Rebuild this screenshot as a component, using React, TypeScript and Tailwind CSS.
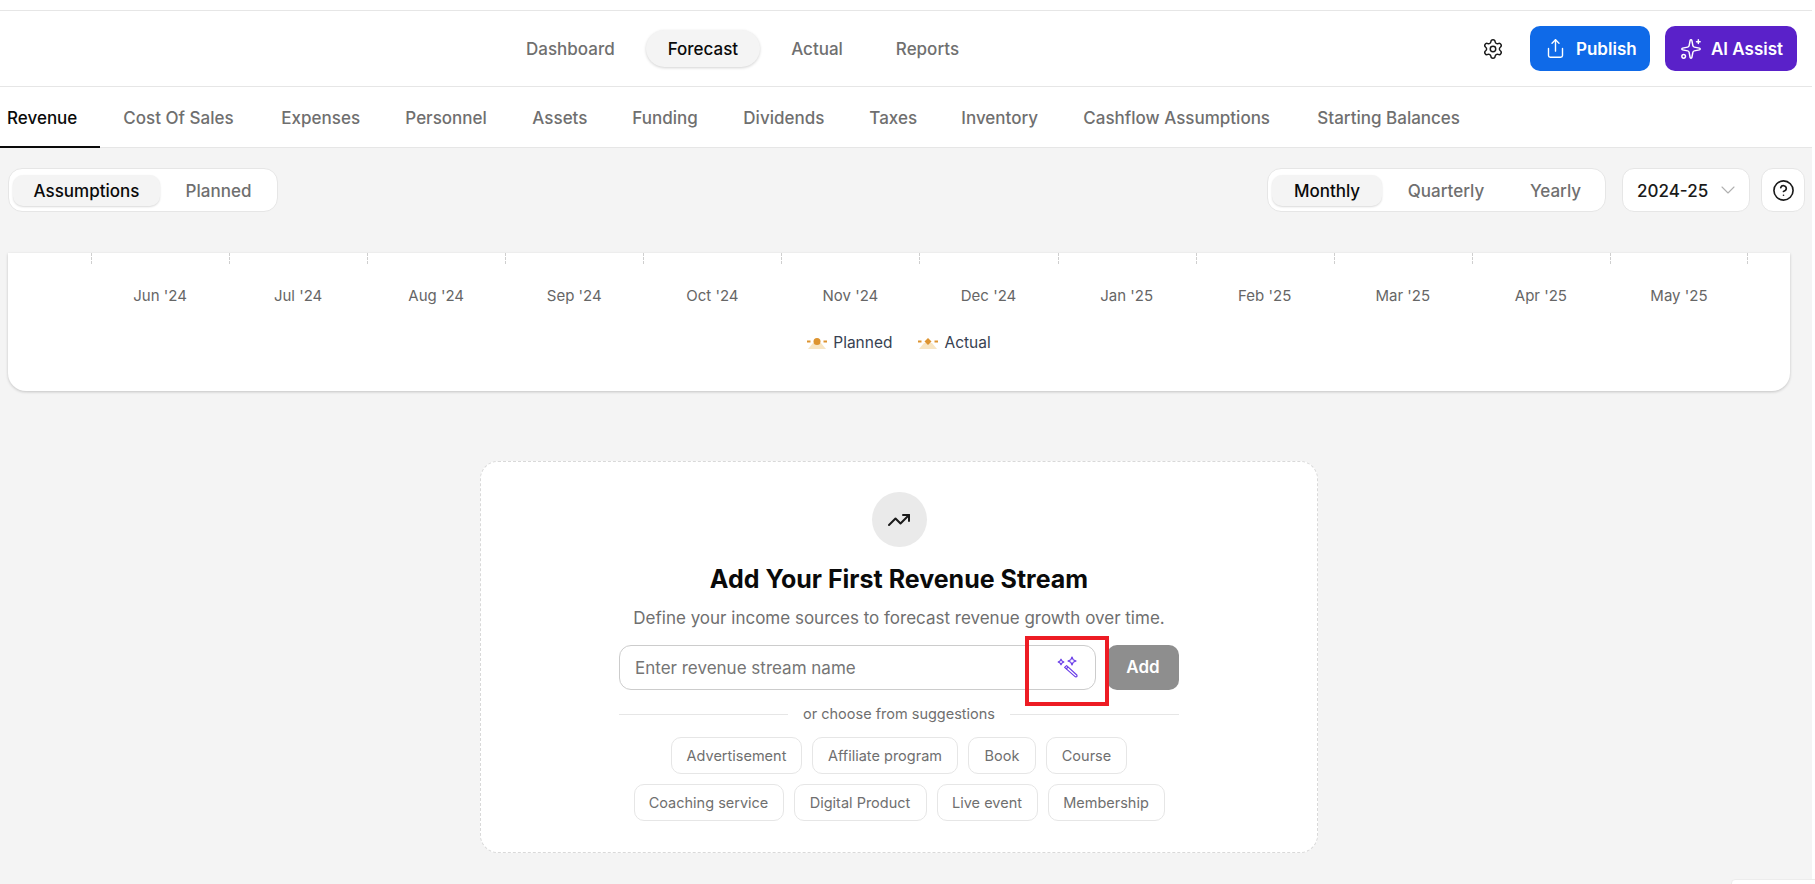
import { ChevronDown, CircleHelp, Settings, Share, Sparkles, TrendingUp } from "lucide-react";

const navItems = ["Dashboard", "Forecast", "Actual", "Reports"];
const tabs = [
  { label: "Cost Of Sales", width: "w-[158px]" },
  { label: "Expenses", width: "w-[124px]" },
  { label: "Personnel", width: "w-[127px]" },
  { label: "Assets", width: "w-[100px]" },
  { label: "Funding", width: "w-[111px]" },
  { label: "Dividends", width: "w-[126px]" },
  { label: "Taxes", width: "w-[92px]" },
  { label: "Inventory", width: "w-[122px]" },
  { label: "Cashflow Assumptions", width: "w-[234px]" },
  { label: "Starting Balances", width: "w-[200px]" },
];
const months = [
  "Jun '24",
  "Jul '24",
  "Aug '24",
  "Sep '24",
  "Oct '24",
  "Nov '24",
  "Dec '24",
  "Jan '25",
  "Feb '25",
  "Mar '25",
  "Apr '25",
  "May '25",
];
const suggestions = [
  [
    { label: "Advertisement", width: "w-[131px]" },
    { label: "Affiliate program", width: "w-[146px]" },
    { label: "Book", width: "w-[68px]" },
    { label: "Course", width: "w-[81px]" },
  ],
  [
    { label: "Coaching service", width: "w-[150px]" },
    { label: "Digital Product", width: "w-[133px]" },
    { label: "Live event", width: "w-[101px]" },
    { label: "Membership", width: "w-[117px]" },
  ],
];

// recharts style legend swatch, dot or diamond over a dashed line and pale area
function LegendIcon({ diamond }: { diamond?: boolean }) {
  return (
    <svg width="20" height="11" viewBox="0 0 20 11">
      <path d="M1 11 L6 5 H14 L19 11 Z" fill="#f6dcae" opacity="0.75" />
      <path d="M0 3.5 H3.5 M16.5 3.5 H20" stroke="#dd9430" strokeWidth="2" />
      {diamond ? (
        <path d="M10 0 L13.5 3.5 L10 7 L6.5 3.5 Z" fill="#dd9430" />
      ) : (
        <circle cx="10" cy="3.5" r="3.5" fill="#dd9430" />
      )}
    </svg>
  );
}

function WandIcon() {
  return (
    <svg
      width="24"
      height="24"
      viewBox="0 0 24 24"
      fill="none"
      stroke="#6a3de8"
      strokeWidth="1.2"
      strokeLinejoin="round"
    >
      <path d="M5 4.2 L6 6 L7.8 7 L6 8 L5 9.8 L4 8 L2.2 7 L4 6 Z" />
      <path d="M16 2 L17.2 4.8 L20 6 L17.2 7.2 L16 10 L14.8 7.2 L12 6 L14.8 4.8 Z" />
      <path d="M8.6 12.4 L10.6 10.6 L20.8 20 Q21.4 21.4 20.4 21.8 Q19.6 22.2 18.8 21.4 Z" />
      <path d="M10 14 L12.2 12" />
    </svg>
  );
}

export default function App() {
  return (
    <div className="relative h-[884px] w-full overflow-hidden bg-white font-['Inter',sans-serif]">
      <div className="w-[1812px] pt-[10px]">
        {/* Top nav */}
        <div className="flex h-[77px] items-center border-y border-[#e6e6e6] bg-white pl-[504px] pr-[15px]">
          <div className="flex items-center gap-[9px]">
            {navItems.map((item) => (
              <div
                key={item}
                className={
                  item === "Forecast"
                    ? "flex h-[37px] items-center rounded-full bg-[#f4f4f4] px-[22px] pt-[3px] text-[17px] font-medium text-[#0a0a0a] shadow-[0_1px_3px_rgba(0,0,0,0.18)]"
                    : "flex h-[37px] items-center px-[22px] pt-[3px] text-[17px] font-medium text-[#6f6f6f]"
                }
              >
                {item}
              </div>
            ))}
          </div>
          <Settings size={22} strokeWidth={1.6} className="ml-auto mr-[26px] text-[#1a1a1a]" />
          <button className="flex h-[45px] w-[120px] items-center gap-[10px] rounded-[10px] bg-[#0f6ae8] pl-[15px] text-[17px] font-semibold text-white">
            <Share size={21} strokeWidth={1.6} />
            <span className="pt-[2px]">Publish</span>
          </button>
          <button className="ml-[15px] flex h-[45px] w-[132px] items-center gap-[9px] rounded-[10px] bg-[#5a21c9] pl-[15px] text-[17px] font-semibold text-white">
            <Sparkles size={22} strokeWidth={1.6} />
            <span className="pt-[2px]">AI Assist</span>
          </button>
        </div>

        {/* Sub tabs */}
        <div className="flex h-[61px] items-stretch border-b border-[#e6e6e6] bg-white">
          <div className="-mb-px flex items-center border-b-2 border-[#0a0a0a] pl-[7px] pr-[23px] pt-[4px] text-[17px] font-medium text-[#0a0a0a]">
            Revenue
          </div>
          {tabs.map((tab) => (
            <div
              key={tab.label}
              className={`flex items-center whitespace-nowrap pl-[23px] pt-[4px] text-[17px] font-medium text-[#6f6f6f] ${tab.width}`}
            >
              {tab.label}
            </div>
          ))}
        </div>

        <div className="h-[737px] bg-[#f4f4f4] pl-2 pr-[22px]">
          {/* Toolbar */}
          <div className="-mr-[15px] flex h-[105px] items-start justify-between pt-[20px]">
            <div className="flex h-[44px] items-center rounded-[14px] border border-[#e6e6e6] bg-white px-1">
              <div className="flex h-[31px] w-[147px] items-center justify-center rounded-[10px] bg-[#f4f4f4] pt-[3px] text-[17px] font-medium text-[#0a0a0a] shadow-[0_1px_2px_rgba(0,0,0,0.15)]">
                Assumptions
              </div>
              <div className="flex h-[31px] w-[113px] items-center justify-center pl-[4px] pt-[3px] text-[17px] font-medium text-[#6f6f6f]">
                Planned
              </div>
            </div>
            <div className="flex items-center">
              <div className="flex h-[44px] w-[339px] items-center rounded-[14px] border border-[#e6e6e6] bg-white pl-1">
                <div className="flex h-[31px] w-[110px] items-center justify-center rounded-[10px] bg-[#f4f4f4] pt-[3px] text-[17px] font-medium text-[#0a0a0a] shadow-[0_1px_2px_rgba(0,0,0,0.15)]">
                  Monthly
                </div>
                <div className="flex h-[31px] w-[128px] items-center justify-center pt-[3px] text-[17px] font-medium text-[#6f6f6f]">
                  Quarterly
                </div>
                <div className="flex h-[31px] w-[91px] items-center justify-center pt-[3px] text-[17px] font-medium text-[#6f6f6f]">
                  Yearly
                </div>
              </div>
              <div className="ml-[16px] flex h-[44px] w-[128px] items-center gap-[8px] rounded-[12px] border border-[#e6e6e6] bg-white pl-[14px] text-[17px] font-medium text-[#1a1a1a]">
                <span className="pt-[3px]">2024-25</span>
                <ChevronDown size={24} strokeWidth={1.1} className="text-[#b0b0b0]" />
              </div>
              <div className="ml-[11px] flex h-[44px] w-[44px] items-center justify-center rounded-[12px] border border-[#e6e6e6] bg-white">
                <CircleHelp size={23} strokeWidth={1.7} className="text-[#1a1a1a]" />
              </div>
            </div>
          </div>

          {/* Chart card, scrolled under the toolbar */}
          <div className="h-[138px] rounded-b-[18px] bg-white shadow-[0_1px_3px_rgba(0,0,0,0.2)]">
            <div className="grid grid-cols-12 pl-[83px] pr-[42px]">
              {months.map((month, idx) => (
                <div key={month} className="relative flex flex-col items-center">
                  <div className="h-[11px] w-full border-l border-dashed border-[#cfcfcf]" />
                  {idx === 11 && (
                    <div className="absolute right-0 top-0 h-[11px] border-l border-dashed border-[#cfcfcf]" />
                  )}
                  <span className="mt-[22px] text-[15px] leading-[20px] text-[#666666]">{month}</span>
                </div>
              ))}
            </div>
            <div className="mt-[27px] flex items-center justify-center gap-[26px] text-[15.5px] leading-[20px] text-[#374151]">
              <div className="flex items-center gap-[6px]">
                <LegendIcon />
                Planned
              </div>
              <div className="flex items-center gap-[6px]">
                <LegendIcon diamond />
                Actual
              </div>
            </div>
          </div>

          {/* Empty state */}
          <div className="mx-auto mt-[70px] flex h-[392px] w-[838px] flex-col items-center rounded-[18px] border border-dashed border-[#d9d9d9] bg-white pt-[30px]">
            <div className="flex h-[55px] w-[55px] items-center justify-center rounded-full bg-[#eaeaea]">
              <TrendingUp size={24} strokeWidth={2} className="text-[#1a1a1a]" />
            </div>
            <h2 className="mt-[16px] text-[25px] font-bold leading-[32px] text-[#0a0a0a]">
              Add Your First Revenue Stream
            </h2>
            <p className="mt-[11px] text-[17px] leading-[24px] text-[#6f6f6f]">
              Define your income sources to forecast revenue growth over time.
            </p>
            <div className="relative mt-[15px] flex w-[560px] gap-[11px]">
              <div className="relative flex-1">
                <input
                  placeholder="Enter revenue stream name"
                  className="h-[45px] w-full rounded-[12px] border border-[#cccccc] bg-white pl-[15px] text-[17px] outline-none placeholder:text-[#757575]"
                />
                <div className="absolute right-[16px] top-[10px]">
                  <WandIcon />
                </div>
              </div>
              <button className="h-[45px] w-[72px] rounded-[10px] bg-[#8e8e8e] text-[17px] font-semibold text-white">
                Add
              </button>
              {/* red annotation box from the screenshot */}
              <div className="absolute left-[406px] top-[-9px] h-[70px] w-[84px] border-4 border-[#ed1c24]" />
            </div>
            <div className="mt-[14px] flex w-[560px] items-center gap-[15px]">
              <div className="h-px flex-1 bg-[#e6e6e6]" />
              <span className="text-[14.5px] leading-[20px] text-[#6f6f6f]">or choose from suggestions</span>
              <div className="h-px flex-1 bg-[#e6e6e6]" />
            </div>
            <div className="mt-[13px] flex flex-col items-center gap-[10px]">
              {suggestions.map((row, r) => (
                <div key={r} className="flex gap-[10px]">
                  {row.map((chip) => (
                    <div
                      key={chip.label}
                      className={`flex h-[37px] items-center justify-center whitespace-nowrap rounded-[10px] border border-[#e6e6e6] bg-white text-[14.5px] text-[#6f6f6f] ${chip.width}`}
                    >
                      {chip.label}
                    </div>
                  ))}
                </div>
              ))}
            </div>
          </div>
        </div>
      </div>

      {/* corner of a widget peeking in at the bottom right */}
      <div className="absolute left-[1731px] top-[879px] h-[20px] w-[100px] rounded-tl-[4px] border border-[#ececec] bg-white" />
    </div>
  );
}
